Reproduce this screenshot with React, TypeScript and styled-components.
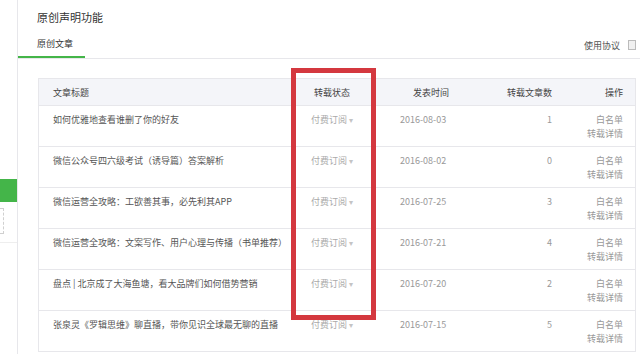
import styled, { createGlobalStyle } from "styled-components";

const rows = [
  { title: "如何优雅地查看谁删了你的好友", date: "2016-08-03", count: 1 },
  { title: "微信公众号四六级考试（诱导篇）答案解析", date: "2016-08-02", count: 0 },
  { title: "微信运营全攻略：工欲善其事，必先利其APP", date: "2016-07-25", count: 3 },
  { title: "微信运营全攻略：文案写作、用户心理与传播（书单推荐）", date: "2016-07-21", count: 4 },
  { title: "盘点 | 北京成了大海鱼塘，看大品牌们如何借势营销", date: "2016-07-20", count: 2 },
  { title: "张泉灵《罗辑思维》聊直播，带你见识全球最无聊的直播", date: "2016-07-15", count: 5 },
];

export default function App() {
  return (
    <Page>
      <GlobalStyle />
      <Sidebar>
        <SideActive />
        <SideDashed />
        <SideLine />
      </Sidebar>
      <Main>
        <Title>原创声明功能</Title>
        <TabBar>
          <Tab>原创文章</Tab>
          <Agreement>
            使用协议
            <AgreementIcon />
          </Agreement>
        </TabBar>
        <Table>
          <HeadRow>
            <Cell $pl={14}>文章标题</Cell>
            <Cell $align="center">转载状态</Cell>
            <Cell $pl={42}>发表时间</Cell>
            <Cell $align="right" $pr={8}>转载文章数</Cell>
            <Cell $align="right" $pr={13}>操作</Cell>
          </HeadRow>
          {rows.map((r) => (
            <Row key={r.date}>
              <Cell $pl={14} $color="#555">{r.title}</Cell>
              <Cell $align="center" $color="#aaa">
                付费订阅 <Caret>▾</Caret>
              </Cell>
              <Cell $pl={29} $color="#999">{r.date}</Cell>
              <Cell $align="right" $pr={8} $color="#999">{r.count}</Cell>
              <Actions>
                <span>白名单</span>
                <span>转载详情</span>
              </Actions>
            </Row>
          ))}
        </Table>
      </Main>
      <Highlight />
    </Page>
  );
}

const GlobalStyle = createGlobalStyle`
  body {
    margin: 0;
    background: #fff;
    font-family: "Noto Sans CJK SC", "Noto Sans", sans-serif;
  }
`;

const Page = styled.div`
  position: relative;
  display: flex;
  width: 640px;
  height: 354px;
  overflow: hidden;
  background: #fff;
`;

const Sidebar = styled.div`
  display: flex;
  flex-direction: column;
  width: 17px;
  flex-shrink: 0;
  border-right: 1px solid #e7e7eb;
`;

const SideActive = styled.div`
  margin-top: 179px;
  height: 23px;
  background: #44b549;
`;

const SideDashed = styled.div`
  margin-top: 6px;
  width: 3px;
  height: 24px;
  border: 1px dashed #d0d0d0;
  border-left: none;
`;

const SideLine = styled.div`
  margin-top: 8px;
  border-top: 1px solid #eee;
`;

const Main = styled.div`
  flex: 1;
  display: flex;
  flex-direction: column;
  min-width: 0;
`;

const Title = styled.div`
  height: 34px;
  line-height: 34px;
  padding-left: 19px;
  font-size: 11px;
  color: #333;
`;

const TabBar = styled.div`
  display: flex;
  align-items: flex-end;
  justify-content: space-between;
  height: 24px;
  border-bottom: 1px solid #e7e7eb;
`;

const Tab = styled.div`
  width: 48px;
  padding-left: 19px;
  height: 22px;
  line-height: 20px;
  font-size: 9px;
  color: #333;
  border-bottom: 2px solid #44b549;
`;

const Agreement = styled.div`
  display: flex;
  align-items: center;
  gap: 8px;
  padding-right: 4px;
  height: 24px;
  padding-bottom: 1px;
  font-size: 9px;
  color: #555;
`;

const AgreementIcon = styled.span`
  width: 6px;
  height: 8px;
  border: 1px solid #bbb;
  background: #f0f0f0;
`;

const Table = styled.div`
  margin: 19px 4px 0 20px;
  border: 1px solid #e7e7eb;
  border-bottom: none;
`;

const HeadRow = styled.div`
  display: grid;
  grid-template-columns: 254px 78px 110px 79px 76px;
  height: 26px;
  align-items: center;
  background: #f4f5f9;
  border-bottom: 1px solid #e7e7eb;
  font-size: 9px;
  color: #444;
`;

const Row = styled.div`
  display: grid;
  grid-template-columns: 254px 78px 110px 79px 76px;
  height: 40px;
  align-items: start;
  border-bottom: 1px solid #e7e7eb;
  font-size: 9px;
  line-height: 14px;
  padding-top: 7px;
  box-sizing: border-box;
  height: 41px;
`;

const Cell = styled.div<{ $align?: string; $pl?: number; $pr?: number; $color?: string }>`
  text-align: ${(p) => p.$align || "left"};
  padding-left: ${(p) => p.$pl || 0}px;
  padding-right: ${(p) => p.$pr || 0}px;
  color: ${(p) => p.$color || "inherit"};
  white-space: nowrap;
`;

const Caret = styled.span`
  color: #c4c4c4;
  font-size: 8px;
`;

const Actions = styled.div`
  display: flex;
  flex-direction: column;
  align-items: flex-end;
  padding-right: 13px;
  color: #999;
`;

const Highlight = styled.div`
  position: absolute;
  left: 291px;
  top: 68px;
  width: 75px;
  height: 242px;
  border: 5px solid #d4383f;
`;
